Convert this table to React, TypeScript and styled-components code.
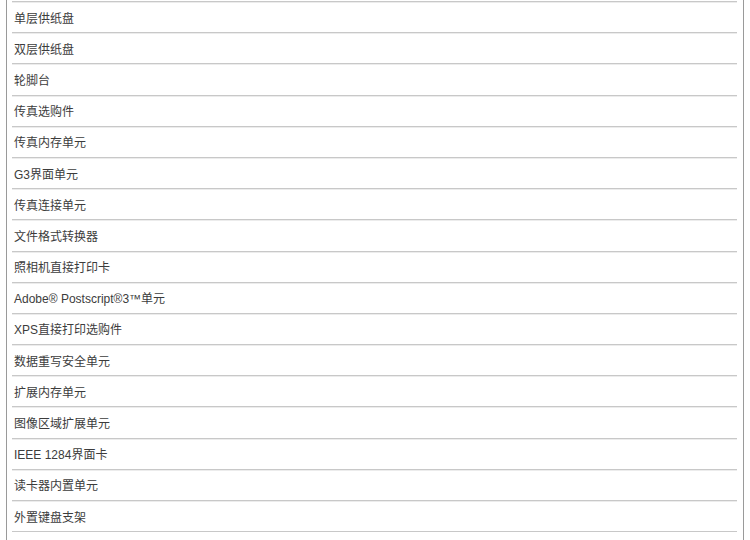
import styled, { createGlobalStyle } from 'styled-components';

const Global = createGlobalStyle`
  html, body {
    margin: 0;
    padding: 0;
    background: #ffffff;
  }
  body {
    font-family: "Liberation Sans", "Noto Sans CJK SC", sans-serif;
  }
`

const Panel = styled.div`
  margin-left: 6px;
  width: 725px;
  border-left: 1px solid #9a9a9a;
  border-right: 1px solid #9a9a9a;
  padding: 1px 6px 8px 5px;
  background: #fff;
`

const List = styled.ul`
  list-style: none;
  margin: 0;
  padding: 0;
`

const Item = styled.li`
  height: 30.2px;
  border-top: 1px solid #c8c8c8;
  box-shadow: inset 0 1px 0 #ececec;
  display: flex;
  align-items: center;
  padding-left: 2px;
  font-size: 12px;
  color: #3c3c3c;
  &:last-child {
    border-bottom: 1px solid #c8c8c8;
  }
`

const options = [
  '单层供纸盘',
  '双层供纸盘',
  '轮脚台',
  '传真选购件',
  '传真内存单元',
  'G3界面单元',
  '传真连接单元',
  '文件格式转换器',
  '照相机直接打印卡',
  'Adobe® Postscript®3™单元',
  'XPS直接打印选购件',
  '数据重写安全单元',
  '扩展内存单元',
  '图像区域扩展单元',
  'IEEE 1284界面卡',
  '读卡器内置单元',
  '外置键盘支架',
]

const App = () => {
  return (
    <>
      <Global />
      <Panel>
        <List>
          {options.map((name) => (
            <Item key={name}>{name}</Item>
          ))}
        </List>
      </Panel>
    </>
  )
}

export default App
